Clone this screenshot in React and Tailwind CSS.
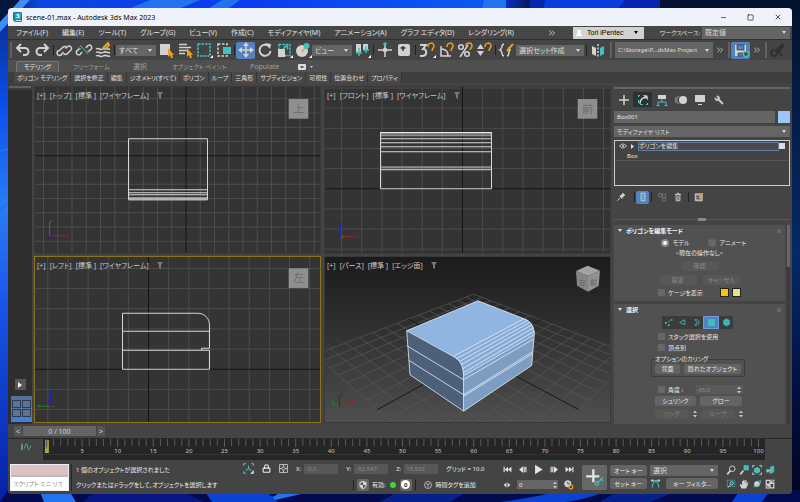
import { Minus, Square, X, UserRound, Wrench, Lock, ChevronsRight } from "lucide-react";
import clsx from "clsx";

const MENU = [
  "ファイル(F)",
  "編集(E)",
  "ツール(T)",
  "グループ(G)",
  "ビュー(V)",
  "作成(C)",
  "モディファイヤ(M)",
  "アニメーション(A)",
  "グラフ エディタ(D)",
  "レンダリング(R)",
];

const RIBBON_PANELS = [
  "ポリゴン モデリング",
  "選択を修正",
  "編集",
  "ジオメトリ(すべて)",
  "ポリゴン",
  "ループ",
  "三角形",
  "サブディビジョン",
  "可視性",
  "位置合わせ",
  "プロパティ",
];

const LIGHT = "#d2d2d2";
const TEAL = "#3fc1c0";
const GOLD = "#f0a01e";

/* ---------- small building blocks ---------- */

function Icon({ children, className = "size-4", box = "0 0 16 16" }) {
  return (
    <svg
      viewBox={box}
      className={clsx("shrink-0", className)}
      fill="none"
      stroke={LIGHT}
      strokeWidth="1.5"
      aria-hidden="true"
    >
      {children}
    </svg>
  );
}

function ToolButton({ label, active, flyout, children }) {
  return (
    <button
      aria-label={label}
      className={clsx(
        "flex h-[17px] w-[19px] shrink-0 items-center justify-center",
        active && "rounded-xs bg-[#5582be]"
      )}
    >
      <Icon className="h-4 w-[18px]" box="0 0 18 16">
        {children}
        {flyout && <path d="M18 13v3h-3z" fill="#fff" stroke="none" />}
      </Icon>
    </button>
  );
}

function Sep() {
  return (
    <div className="flex w-1 shrink-0 justify-center">
      <div className="h-2.5 w-px bg-[#222]" />
    </div>
  );
}

function Handle() {
  return <div className="mx-px h-4 w-0.5 shrink-0 bg-[#626262]" />;
}

function Select({ label, value, className, textClass = "text-[7px]" }) {
  return (
    <div className={clsx("relative flex shrink-0 items-center bg-[#656565]", className)}>
      <select
        aria-label={label}
        defaultValue={value}
        className={clsx(
          "h-full w-full appearance-none truncate bg-transparent pr-2 pl-[3px] leading-none text-[#dcdcdc] outline-none",
          textClass
        )}
      >
        <option>{value}</option>
      </select>
      <svg viewBox="0 0 4 3" className="pointer-events-none absolute right-1 h-[3px] w-1">
        <path d="M0 0h4L2 3z" fill="#d8d8d8" />
      </svg>
    </div>
  );
}

function PushButton({ children, className, disabled }) {
  return (
    <button
      disabled={disabled}
      className={clsx(
        "flex items-center justify-center rounded-xs text-[6px] leading-none whitespace-nowrap",
        disabled ? "bg-[#575757] text-[#8c8c8c]" : "bg-[#646464] text-[#e8e8e8]",
        className
      )}
    >
      {children}
    </button>
  );
}

function Check({ children, className }) {
  return (
    <label className={clsx("flex items-center gap-[3px] whitespace-nowrap", className)}>
      <input type="checkbox" className="size-[7px] appearance-none bg-[#676767] checked:bg-white" />
      {children}
    </label>
  );
}

function Spinner() {
  return (
    <svg viewBox="0 0 4 8" className="h-2 w-1 shrink-0" fill="#c4c4c4" aria-hidden="true">
      <path d="M0 3h4L2 .5zM0 5h4L2 7.500z" />
    </svg>
  );
}

/* ---------- wallpaper ---------- */

function Wallpaper() {
  return (
    <svg
      viewBox="0 0 800 502"
      preserveAspectRatio="none"
      className="absolute inset-0 size-full"
      aria-hidden="true"
    >
      <defs>
        <linearGradient id="wpTop">
          <stop offset="0" stopColor="#0a1e58" />
          <stop offset=".05" stopColor="#0b46e0" />
          <stop offset=".3" stopColor="#0c3bf0" />
          <stop offset=".6" stopColor="#0a5af0" />
          <stop offset=".63" stopColor="#0733cc" />
          <stop offset=".67" stopColor="#04103c" />
          <stop offset="1" stopColor="#04132f" />
        </linearGradient>
        <linearGradient id="wpLeft" x2="0" y2="1">
          <stop offset="0" stopColor="#0a2a90" />
          <stop offset=".2" stopColor="#0a50ec" />
          <stop offset=".4" stopColor="#2a7cf6" />
          <stop offset=".6" stopColor="#1a55ea" />
          <stop offset="1" stopColor="#0420a4" />
        </linearGradient>
        <linearGradient id="wpRight" x2="0" y2="1">
          <stop offset="0" stopColor="#04132f" />
          <stop offset=".5" stopColor="#052a66" />
          <stop offset=".8" stopColor="#020d3e" />
          <stop offset="1" stopColor="#01051c" />
        </linearGradient>
      </defs>
      <path d="M0 0h800v10H0z" fill="url(#wpTop)" />
      <path d="M0 8h12v494H0z" fill="url(#wpLeft)" />
      <path d="M788 8h12v494h-12z" fill="url(#wpRight)" />
      <path d="M8 490h792v12H0z" fill="#030a4e" />
      <path d="M0 0h20L0 22z" fill="#06163c" />
      <path d="M20 0h10L0 32V22z" fill="#3f8bf8" />
      <g fill="#2173ee">
        <path d="M150 0h50l-24 10h-50zM222 0h18l-14 10h-20zM484 0h22v10h-24z" />
        <path d="M0 150l9-2v2l-9 2zM0 208l9-6v2l-9 7z" />
        <path d="M40 492h30l6 10H44zM270 502c16-6 30-6 44-12h-30c-8 6-14 8-24 12z" />
      </g>
      <path d="M84 502c4-6 10-10 16-12h80l24 12z" fill="#071683" />
      <path d="M204 490h60l14 12h-66zM500 502c30-4 50-8 60-12h50c-16 6-30 10-44 12zM740 490h30l-8 12h-30z" fill="#0a43d4" />
      <path d="M400 490h70l-20 12h-70zM620 490h60l-30 12h-50z" fill="#06208c" />
      <path d="M530 0h130v10H530z" fill="#0626b0" />
      <path d="M545 0h80l-8 10h-74z" fill="#0a3ce0" />
    </svg>
  );
}

/* ---------- top bars ---------- */

function TitleBar() {
  return (
    <header className="flex h-[18px] shrink-0 items-center bg-[#f0f2f9] pr-2.5 pl-[5px] text-black">
      <svg viewBox="0 0 9 10" className="mr-1 h-2.5 w-[9px]" aria-hidden="true">
        <path d="M1 0h7l1 1v8l-1 1H2L0 8V1z" fill="#137d92" />
        <path d="M2 1h6v6H2z" fill="#2aa9bd" />
        <text x="3" y="6" fontSize="6" fontWeight="bold" fill="#fff">3</text>
        <path d="M2 8h6v1H3z" fill="#d7f1f5" />
      </svg>
      <h1 className="flex-1 truncate text-[7px] leading-none">scene-01.max - Autodesk 3ds Max 2023</h1>
      <div className="flex items-center gap-5">
        <button aria-label="最小化"><Minus className="size-[7px]" /></button>
        <button aria-label="最大化"><Square className="size-[7px]" /></button>
        <button aria-label="閉じる"><X className="size-2" /></button>
      </div>
    </header>
  );
}

function MenuBar() {
  return (
    <nav className="flex h-[14px] shrink-0 items-center border-b border-[#303030] bg-[#464646] pl-2 text-[7px] leading-none text-[#e2e2e2]">
      <div className="flex gap-[14px]">
        {MENU.map((m) => (
          <button key={m} className="whitespace-nowrap">{m}</button>
        ))}
      </div>
      <div className="ml-auto flex h-full items-center">
        <button aria-label="メニューを展開" className="mr-4">
          <ChevronsRight className="size-2.5" />
        </button>
        <button className="flex h-3 w-[71px] items-center bg-[#d2d2d2] px-0.5 font-['Liberation_Sans'] text-[7px] text-black">
          <UserRound className="mr-1 size-2 fill-white text-white" />
          Tori iPentec
          <svg viewBox="0 0 4 3" className="mr-1 ml-auto h-[3px] w-1"><path d="M0 0h4L2 3z" /></svg>
        </button>
        <span className="ml-3 w-11 text-right text-[6px] whitespace-nowrap">ワークスペース:</span>
        <Select label="ワークスペース" value="既定値" className="mr-0.5 ml-0.5 h-3 w-[88px]" />
      </div>
    </nav>
  );
}

function Toolbar() {
  return (
    <div className="flex h-5 shrink-0 items-center overflow-hidden bg-[#444] pl-px">
      <Handle />
      <ToolButton label="元に戻す">
        <path d="M4 6h7a3.500 3.500 0 0 1 0 7H9M7 2L3 6l4 4" strokeWidth="2" />
      </ToolButton>
      <ToolButton label="やり直し">
        <path d="M14 6H7a3.500 3.500 0 0 0 0 7h2M11 2l4 4-4 4" strokeWidth="2" />
      </ToolButton>
      <Sep />
      <ToolButton label="選択してリンク">
        <path d="M8 9.500L6.500 11A2.500 2.500 0 1 1 4 8l3-3a2.500 2.500 0 0 1 4 0M10 6l1.500-1.500A2.500 2.500 0 1 1 15 8l-3 3a2.500 2.500 0 0 1-4 0" transform="translate(-.5 .5)" />
      </ToolButton>
      <ToolButton label="選択をリンク解除">
        <path d="M7 10l-1 1.500A2.500 2.500 0 1 1 3 8l2-2M11 6l1-1.500A2.500 2.500 0 1 1 15 8l-2 2" />
        <path d="M5 3l8 9M3 6l3 1M12 9l3 1" stroke={TEAL} strokeWidth="1" />
      </ToolButton>
      <ToolButton label="スペース ワープにバインド">
        <path d="M2 7c3-2 4 2 7 0s4 1 7 0M2 10.500c3-2 4 2 7 0s4 1 7 0M2 14c3-2 4 2 7 0s4 1 7 0" />
        <path d="M9 6l5-5 1 2-4 5" stroke={GOLD} strokeWidth="2" />
      </ToolButton>
      <Sep />
      <Select label="選択フィルタ" value="すべて" className="h-[11px] w-10" />
      <ToolButton label="オブジェクトを選択">
        <path d="M3 2h10v11H3z" fill={LIGHT} stroke="none" />
        <path d="M11 6v9l2-2 1 3h2l-1-3h2z" fill={GOLD} stroke="none" />
      </ToolButton>
      <ToolButton label="名前による選択">
        <path d="M3 2.500h8M3 5.500h12M3 8.500h8M3 11.500h6" />
        <path d="M11 6v9l2-2 1 3h2l-1-3h2z" fill={GOLD} stroke="none" />
      </ToolButton>
      <ToolButton label="矩形選択領域" flyout>
        <path d="M3 2h12v12H3z" stroke={TEAL} strokeDasharray="2.500 1" />
      </ToolButton>
      <ToolButton label="窓/交差">
        <path d="M4 2h9v12H4z" strokeDasharray="2.500 1.500" />
        <path d="M9 5h8v7H9z" fill={TEAL} stroke="none" />
      </ToolButton>
      <Sep />
      <ToolButton label="選択して移動" active>
        <path d="M9 3v10M4 8h10" />
        <path d="M9 0l3 4H6zM9 16l3-4H6zM1 8l4-3v6zM17 8l-4-3v6z" fill={LIGHT} stroke="none" />
      </ToolButton>
      <ToolButton label="選択して回転">
        <path d="M13 4.500A5.500 5.500 0 1 0 14.500 9" strokeWidth="2" />
        <path d="M9 1l6 1-1 5z" fill={LIGHT} stroke="none" />
      </ToolButton>
      <ToolButton label="選択して均等にスケール" flyout>
        <path d="M4 2.500h11v11H4z" stroke={TEAL} strokeDasharray="2.500 1" />
        <path d="M3 7h7v8H3z" fill={LIGHT} stroke="none" />
        <path d="M8 7l4-4M9.500 4.500h3v3" stroke={TEAL} />
      </ToolButton>
      <ToolButton label="選択して配置" flyout>
        <circle cx="8" cy="9" r="6" fill={LIGHT} stroke="none" />
        <path d="M8 10l3-4" stroke={GOLD} />
        <circle cx="12.500" cy="4" r="3" fill={TEAL} stroke="none" />
      </ToolButton>
      <Select label="参照座標系" value="ビュー" className="h-[11px] w-10" />
      <ToolButton label="基点中心を使用" flyout>
        <path d="M3 2h5v8H3zM10 2h5v6h-5z" fill={LIGHT} stroke="none" />
        <path d="M6 6v8M3 11h6M13 4v7M10 8h6" stroke={TEAL} />
      </ToolButton>
      <Sep />
      <ToolButton label="選択して操作">
        <path d="M9 1v14M2 8h14" />
        <circle cx="9" cy="2" r="1" fill={TEAL} stroke={TEAL} />
        <circle cx="9" cy="8" r="1.500" fill={LIGHT} />
      </ToolButton>
      <ToolButton label="キーボード ショートカット">
        <rect x="3" y="2" width="12" height="12" rx="2" fill={LIGHT} stroke="none" />
        <path d="M8 4v5M5.500 6h5" stroke="#333" />
      </ToolButton>
      <Sep />
      <ToolButton label="スナップ切り替え" flyout>
        <path d="M2 3h6L5 7c5 0 4 7-1 7H2" strokeWidth="2" />
        <path d="M10 5c0-5 6-5 6-1 0 2-2 2-2 5" stroke={GOLD} />
      </ToolButton>
      <ToolButton label="角度スナップ">
        <path d="M4 4v10h10M4 7c4 0 7 2 7 7" />
        <path d="M10 5c0-5 6-5 6-1 0 2-2 2-2 5" stroke={GOLD} />
      </ToolButton>
      <ToolButton label="パーセント スナップ">
        <circle cx="5" cy="5" r="2.300" /><circle cx="11" cy="12" r="2.300" />
        <path d="M12 3L4 15" />
        <path d="M10 4c0-4 6-4 6 0 0 2-2 2-2 4" stroke={GOLD} />
      </ToolButton>
      <ToolButton label="スピナー スナップ">
        <path d="M2 7h7L5.500 2zM2 9h7l-3.500 5z" fill={LIGHT} stroke="none" />
        <path d="M10 5c0-5 6-5 6-1 0 2-2 2-2 5" stroke={GOLD} />
      </ToolButton>
      <Sep />
      <ToolButton label="名前付き選択セットを編集">
        <path d="M6 2c-3 0-1 5-4 6 3 1 1 6 4 6M9 14c3 0 1-5 3-6-1-1-1-2-1-3" />
        <path d="M9 9l6-7" stroke={GOLD} strokeWidth="2" />
      </ToolButton>
      <Select label="選択セット" value="選択セット作成" className="h-[11px] w-[68px]" />
      <Sep />
      <ToolButton label="ミラー">
        <path d="M3 4l4 2v8l-4-2z" fill={LIGHT} stroke="none" />
        <path d="M9 2v13" strokeDasharray="2 1.500" />
        <path d="M15 4l-4 2v8l4-2z" fill={TEAL} stroke="none" />
      </ToolButton>
      <div className="mx-0.5"><Handle /></div>
      <Select
        label="プロジェクト フォルダ"
        value="C:\Storage\P...dsMax Project"
        className="h-4 w-[98px]"
        textClass="text-[6px]"
      />
      <button aria-label="さらに表示" className="mx-0.5">
        <ChevronsRight className="size-2.5 text-[#ccc]" />
      </button>
      <Handle />
      <ToolButton label="自動保存" active>
        <path d="M3 3h11v11H3z" fill={LIGHT} stroke="none" />
        <path d="M5 3h7v5H5zM6 11h5v3H6z" fill="#5582be" stroke="#333" strokeWidth=".7" />
        <circle cx="14" cy="12" r="2.600" fill="#444" stroke={TEAL} />
      </ToolButton>
      <button aria-label="さらに表示" className="mx-0.5">
        <ChevronsRight className="size-2.5 text-[#ccc]" />
      </button>
      <Handle />
      <ToolButton label="ペイント">
        <path d="M7 9l7-7M9 11l6-8" stroke="#2e2e2e" strokeWidth="2" />
        <circle cx="5" cy="11" r="3" stroke="#2e2e2e" />
        <path d="M10 10l3 4" stroke="#2e2e2e" />
      </ToolButton>
    </div>
  );
}

function Ribbon() {
  return (
    <div className="shrink-0 text-[7px] leading-none">
      <div className="flex h-3 items-end bg-[#4f4f4f] pl-2 text-[#9f9f9f]">
        <button className="mr-3.5 h-[11px] w-[43px] rounded-t-xs border border-b-0 border-[#777] bg-[#5a5a5a] text-[6px] text-[#e4e4e4]">
          モデリング
        </button>
        <button className="mb-0.5 w-[35px] text-[6px] whitespace-nowrap">フリーフォーム</button>
        <button className="mb-0.5 ml-6 w-4">選択</button>
        <button className="mb-0.5 ml-6 w-[54px] text-[6px] whitespace-nowrap">オブジェクト ペイント</button>
        <button className="mb-0.5 ml-6">Populate</button>
        <button aria-label="リボンを最小化" className="mb-0.5 ml-[19px] flex items-center gap-1">
          <svg viewBox="0 0 8 6" className="h-1.5 w-2"><rect width="8" height="6" rx="1" fill="#ddd" /><path d="M2.500 3h3" stroke="#333" strokeWidth="1.500" /></svg>
          <svg viewBox="0 0 3 2" className="h-0.5 w-[3px]"><path d="M0 0h3L1.500 2z" fill="#ccc" /></svg>
        </button>
      </div>
      <div className="flex h-[11px] items-center bg-[#3e3e3e] pl-1.5 text-[6px] text-[#e0e0e0]">
        {RIBBON_PANELS.map((p) => (
          <button key={p} className="h-full border-r border-[#353535] bg-[#484848] px-[3px] whitespace-nowrap">
            {p}
          </button>
        ))}
      </div>
    </div>
  );
}

/* ---------- viewports ---------- */

function GridLines({ cx, cy, step }) {
  const n = Array.from({ length: 43 }, (_, i) => i - 21).filter((i) => i !== 0);
  return (
    <g strokeWidth="1">
      <g stroke="#4c4c4c">
        {n.map((i) => (
          <path key={i} d={`M${cx + i * step} 0V502M0 ${cy + i * step}H800`} />
        ))}
      </g>
      <path d={`M${cx} 0V502M0 ${cy}H800`} stroke="#141414" />
    </g>
  );
}

function FaceCube({ x, y, label }) {
  return (
    <g>
      <rect x={x} y={y} width="19" height="19" fill="#8f8f8f" stroke="#9c9c9c" strokeWidth=".5" />
      <text x={x + 9.5} y={y + 13.5} textAnchor="middle" fontSize="11" fill="#666b74">{label}</text>
    </g>
  );
}

function Axis({ x, y, arms }) {
  return (
    <g strokeWidth="1" fontSize="6">
      {arms.map(([name, dx, dy, color]) => (
        <g key={name}>
          <path d={`M${x} ${y}l${dx} ${dy}`} stroke={color} />
          <text x={x + dx} y={y + dy + 1} fill={color}>{name}</text>
        </g>
      ))}
    </g>
  );
}

function Viewport({ name, mode = "ワイヤフレーム", box, active, className = "bg-[#343434]", children }) {
  return (
    <section
      className={clsx(
        "relative overflow-hidden border",
        active ? "border-[#8c7220]" : "border-[#393939]",
        className
      )}
    >
      <svg
        viewBox={box}
        preserveAspectRatio="xMidYMid slice"
        className="absolute inset-0 size-full"
        fill="none"
      >
        {children}
      </svg>
      <div className="relative flex items-center gap-1 px-0.5 pt-1 text-[7px] leading-[9px] text-[#c8c8c8]">
        <span>[+]</span>
        <span>[{name}]</span>
        <span>[標準 ]</span>
        <span>[{mode}]</span>
        <svg viewBox="0 0 6 7" className="ml-1 h-[7px] w-1.5"><path d="M0 0h6L4 3v4L2 6V3z" fill="#777" /></svg>
      </div>
    </section>
  );
}

const RED = "#b01c1c";
const GREEN = "#188a18";
const BLUE = "#2020c0";

// ground plane -> screen; u and v run from -1 (far) to 1 (near)
function project(u, v) {
  const w = 1 - 0.2033 * u - 0.2133 * v;
  return [(476.3 - 15 * u - 179.5 * v) / w, (355.4 - 28.8 * u - 32.9 * v) / w];
}

function GroundGrid() {
  const steps = Array.from({ length: 15 }, (_, i) => (i - 7) / 7);
  const line = (a, b) => `M${a.join(" ")}L${b.join(" ")}`;
  return (
    <g>
      <g stroke="#595959" strokeWidth=".7">
        {steps.map((s) => (
          <path
            key={s}
            d={line(project(s, -1), project(s, 1)) + line(project(-1, s), project(1, s))}
          />
        ))}
      </g>
      <path
        d={line(project(-1, 0), project(1, 0)) + line(project(0, -1), project(0, 1))}
        stroke="#141414"
      />
    </g>
  );
}

// profile of the rounded edge, near end and far end
const BEVEL = [
  [453.3, 356.7, 524, 319],
  [456.5, 359, 527.5, 320.5],
  [459, 362, 530, 322.5],
  [461, 365, 532, 325],
  [462.5, 369, 533.5, 328],
  [463.3, 373, 534.3, 331.5],
  [463.5, 376, 534.3, 335],
];

function Viewports() {
  return (
    <main className="grid flex-1 grid-cols-2 grid-rows-2 gap-x-[3px] gap-y-0.5 pt-[3px] pr-px pb-px pl-0.5">
      <Viewport name="トップ" box="35 87 285 167">
        <GridLines cx={186} cy={156.5} step={14.25} />
        <g stroke="#d6d6d6">
          <path d="M128.500 139.500h79v61h-79zM129 190.500h78M129 193.500h78M129 195.500h78" />
          <path d="M129 199.500h78" strokeWidth="3" stroke="#b4b4b4" />
        </g>
        <FaceCube x={289} y={100} label="上" />
        <Axis x={49.5} y={236.5} arms={[["x", 16, 0, RED], ["y", 0, -14, GREEN], ["z", 0.5, 0.5, BLUE]]} />
      </Viewport>

      <Viewport name="フロント" box="325 87 285 167">
        <GridLines cx={462.5} cy={189.5} step={20.15} />
        <g stroke="#d6d6d6">
          <path d="M380.500 133.500h111v56h-111zM381 139.500h110M381 143.500h110M381 147.500h110M381 152.500h110M381 170.500h110" />
          <path d="M380 133.500h112" stroke="#fff" />
          <path d="M381 136h110M381 168h110" strokeWidth="2" stroke="#8c8c8c" />
        </g>
        <FaceCube x={578} y={100} label="前" />
        <Axis x={340.5} y={237.5} arms={[["x", 15, 0, RED], ["z", 0, -14, BLUE], ["y", 0.5, 0.5, GREEN]]} />
      </Viewport>

      <Viewport name="レフト" box="35 256 285 166" active>
        <GridLines cx={148.5} cy={368.5} step={20.15} />
        <g stroke="#d6d6d6">
          <path d="M209.500 349.500v19h-87v-56h75c7 0 12 5 12 12v23h-8v2M122.500 330.500h87M122.500 349.500h87" />
        </g>
        <FaceCube x={289} y={268} label="左" />
        <Axis x={50.5} y={405.5} arms={[["y", -13, 0, GREEN], ["z", 0, -14, BLUE], ["x", 0.5, 0.5, RED]]} />
      </Viewport>

      <Viewport
        name="パース"
        mode="エッジ面"
        box="325 257 285 166"
        className="bg-linear-to-b from-[#1b1b1b] to-[#4e4e4e]"
      >
        <GroundGrid />
        <path d="M478 301L406.700 331 453.300 356.700 463.500 376 534.300 335C534 325 530 321 524 319z" fill="#8fb5e0" />
        <path d="M406.700 331L453.300 356.700C460 360 463.500 366 463.500 376L463.700 411.300 410 375z" fill="#4c6079" />
        <path d="M463.500 372L534.300 331.500 531.700 365.700 463.700 411.300z" fill="#7d9dc2" />
        <path d="M453.300 356.700L524 319C530 321 534 326 534.300 334L463.500 376C463 366 460 361 453.300 356.700z" fill="#87abd6" />
        <g stroke="#e4eefa" strokeWidth=".8">
          <path d="M478 301L406.700 331 453.300 356.700C460 360 463.500 366 463.500 376V411.300L410 375 406.700 331M478 301L524 319C530 321 534 326 534.300 334L531.700 365.700 463.700 411.300" />
          {BEVEL.map(([x1, y1, x2, y2]) => (
            <path key={y1} d={`M${x1} ${y1}L${x2} ${y2}`} />
          ))}
          <path d="M407.300 346.300L463.500 380 534 339M409 360.700L463.500 395 532.500 352M463.500 396.500L532.500 354" />
        </g>
        <g stroke="none">
          <path d="M587.700 266L600 271 588 276.300 576 271.300z" fill="#a3a3a3" />
          <path d="M576 271.300L588 276.300V292L577 286z" fill="#858585" />
          <path d="M600 271L588 276.300V292L598.700 286z" fill="#929292" />
          <text x="579" y="285" fontSize="7" fill="#5c6068">左</text>
          <text x="590" y="285" fontSize="7" fill="#5c6068">前</text>
        </g>
        <Axis x={339.5} y={407} arms={[["x", 12, -5, RED], ["z", 0, -12, BLUE], ["y", -8, -4, GREEN]]} />
      </Viewport>
    </main>
  );
}

function LayoutStrip() {
  return (
    <aside className="flex w-6 shrink-0 flex-col items-center bg-[#2e2e2e] pb-0.5">
      <div className="flex h-[7px] w-full items-center bg-[#3e3e3e] px-px">
        <div className="h-0.5 w-full bg-[#606060]" />
      </div>
      <button aria-label="ビューポート レイアウト タブを展開" className="mt-auto flex h-[11px] w-[11px] items-center justify-center bg-[#555]">
        <svg viewBox="0 0 4 6" className="h-1.5 w-1"><path d="M0 0l4 3-4 3z" fill="#eee" /></svg>
      </button>
      <button aria-label="4 分割レイアウト" className="mt-1.5 ml-0.5 grid h-[26px] w-[21px] grid-cols-2 gap-px bg-linear-to-b from-[#566f92] to-[#3f82dc] px-px pt-1 pb-[5px]">
        {[0, 1, 2, 3].map((i) => (
          <span key={i} className="border border-[#2b3d56] bg-[#62728a]" />
        ))}
      </button>
    </aside>
  );
}

/* ---------- command panel ---------- */

function Rollout({ title, children, className }) {
  return (
    <section className={clsx("bg-[#515151] px-1", className)}>
      <h2 className="flex h-[11px] items-center gap-1 text-[6px] font-bold text-[#f4f4f4]">
        <svg viewBox="0 0 4 3" className="h-[3px] w-1"><path d="M0 0h4L2 3z" fill="#ddd" /></svg>
        {title}
        <span className="ml-auto size-1 bg-[#666]" />
      </h2>
      {children}
    </section>
  );
}

function PanelTabs() {
  return (
    <div className="flex h-[15px] items-center">
      <ToolButton label="作成"><path d="M9 3v10M4 8h10" /></ToolButton>
      <button aria-label="修正" className="flex h-[15px] w-[19px] items-center justify-center bg-[#303030]">
        <Icon className="size-3">
          <path d="M2 2h12v12H2z" stroke={TEAL} strokeDasharray="4 4" strokeDashoffset="2" />
          <path d="M4 13c0-6 3-8 8-9" strokeWidth="2" />
          <path d="M10 2h4v4h-4z" fill={LIGHT} stroke="none" />
        </Icon>
      </button>
      <ToolButton label="階層">
        <path d="M5 3h8v4H5z" fill={LIGHT} stroke="none" />
        <path d="M9 7v3M5 13v-3h8v3M3.500 13.500h3M11.500 13.500h3" stroke={TEAL} strokeWidth="1" />
      </ToolButton>
      <ToolButton label="モーション">
        <circle cx="11" cy="8" r="4" fill={LIGHT} stroke="none" />
        <path d="M7 4c-3 2-3 6 0 8M4 5c-1 2-1 4 0 6" stroke="#777" />
      </ToolButton>
      <ToolButton label="表示">
        <path d="M4 3h10v7H4zM7 12h4v1H7z" fill={LIGHT} stroke="none" />
      </ToolButton>
      <button aria-label="ユーティリティ" className="flex w-[19px] justify-center">
        <Wrench className="size-2.5 -scale-x-100 fill-[#ccc] text-[#ccc]" strokeWidth={1} />
      </button>
    </div>
  );
}

function ModifierStack() {
  return (
    <>
      <ul className="mt-[3px] h-[46px] border border-[#ccc] bg-[#434343] leading-none text-[#e4e4e4]">
        <li className="flex h-2.5 items-center pr-1 pl-1">
          <Icon className="h-1.5 w-2" box="0 0 12 8">
            <path d="M1 4c3-4 7-4 10 0-3 4-7 4-10 0z" /><circle cx="6" cy="4" r="1" />
          </Icon>
          <svg viewBox="0 0 3 5" className="mx-1 h-[5px] w-[3px]"><path d="M0 0l3 2.500L0 5z" fill="#ddd" /></svg>
          <span className="flex h-[9px] flex-1 items-center border border-[#5c7ca5] bg-[#4a4a4a]">ポリゴンを編集</span>
          <span className="size-1.5 bg-[#ddd]" />
        </li>
        <li className="flex h-2.5 items-center border-b border-[#555] pl-3">Box</li>
      </ul>
      <div className="mt-[3px] flex h-4 items-center pl-0.5">
        <button aria-label="スタックをピン固定" className="w-4">
          <Icon className="size-2.5"><path d="M2 14l5-5" /><path d="M5 6l5 5 1-3 4-3-4-4-3 4z" fill={LIGHT} stroke="none" /></Icon>
        </button>
        <Sep />
        <button aria-label="最終結果を表示" className="flex h-[13px] w-[13px] items-center justify-center rounded-xs bg-[#5582be]">
          <Icon className="size-2.5"><path d="M4 2h8M5 3v11h6V3" /><path d="M8 4v9" stroke={TEAL} strokeWidth="2" /></Icon>
        </button>
        <Sep />
        <button aria-label="固有にする" className="flex w-[17px] justify-center">
          <Icon className="size-2.5"><g stroke="#777"><circle cx="5" cy="5" r="3" /><circle cx="11" cy="6" r="3" /><circle cx="11" cy="12" r="3" /></g></Icon>
        </button>
        <button aria-label="モディファイヤを除去" className="flex w-4 justify-center">
          <Icon className="size-2.5"><path d="M3 4h10M6 2h4M5 5v9h6V5M8 6v7" /></Icon>
        </button>
        <Sep />
        <button aria-label="モディファイヤ セットを設定" className="ml-1">
          <Icon className="size-2.5">
            <path d="M2 3h11v11H2z" fill="#999" /><path d="M4 7h5M4 10h5" stroke="#333" />
            <path d="M8 9l6-7" stroke={GOLD} strokeWidth="2.500" />
          </Icon>
        </button>
      </div>
    </>
  );
}

function CommandPanel() {
  return (
    <aside className="w-[180px] shrink-0 overflow-hidden bg-[#444] pr-0.5 pl-0.5 text-[6px] leading-none text-[#e8e8e8]">
      <div className="mt-1 h-0.5 bg-[#636363]" />
      <div className="mt-[3px]"><PanelTabs /></div>
      <div className="mt-1 flex h-3 gap-[3px]">
        <input
          aria-label="オブジェクト名"
          defaultValue="Box001"
          className="min-w-0 flex-1 bg-[#646464] px-[3px] outline-none"
        />
        <button aria-label="オブジェクト カラー" className="w-3 bg-[#9cc6f5]" />
      </div>
      <Select
        label="モディファイヤ"
        value="モディファイヤ リスト"
        className="mt-[3px] h-[11px]"
        textClass="text-[6px]"
      />
      <ModifierStack />
      <div className="mt-[13px] mb-1 flex h-[3px] items-center justify-center">
        <div className="h-px flex-1 bg-[#5a5a5a]" />
        <div className="h-[3px] w-2 bg-[#888]" />
        <div className="h-px flex-1 bg-[#5a5a5a]" />
      </div>

      <div className="flex gap-0.5">
        <div className="flex-1">
          <Rollout title="ポリゴンを編集モード" className="h-[76px]">
            <div className="mt-[3px] flex justify-center gap-[18px] pl-2">
              <label className="flex items-center gap-1">
                <input type="radio" name="mode" defaultChecked className="size-2 appearance-none rounded-full bg-[#686868] checked:border-2 checked:border-[#888] checked:bg-white" />
                モデル
              </label>
              <label className="flex items-center gap-1">
                <input type="radio" name="mode" className="size-2 appearance-none rounded-full bg-[#686868] checked:bg-white" />
                アニメート
              </label>
            </div>
            <p className="mt-[3px] text-center">&lt;現在の操作なし&gt;</p>
            <PushButton disabled className="mx-auto mt-[5px] h-2.5 w-[38px]">確認</PushButton>
            <div className="mt-1 flex justify-center gap-1.5">
              <PushButton disabled className="h-2.5 w-[38px]">設定</PushButton>
              <PushButton disabled className="h-2.5 w-[38px]">キャンセル</PushButton>
            </div>
            <div className="mt-[3px] flex items-center pl-10">
              <Check className="w-[62px]">ケージを表示</Check>
              <button aria-label="ケージの色" className="size-[9px] border border-[#222] bg-[#ffc400]" />
              <button aria-label="選択したケージの色" className="ml-[3px] size-[9px] border border-[#222] bg-[#e4e08c]" />
            </div>
          </Rollout>

          <Rollout title="選択" className="mt-[3px] h-[120px]">
            <div className="mt-px ml-11 flex h-[13px] w-[71px] items-center bg-[#3b3b3b]">
              {[
                ["頂点", <path key="p" d="M2 7h3v3H2zM7 11h3v3H7zM8 5h2v2H8zM12 2h3v3h-3z" fill={TEAL} stroke="none" />],
                ["エッジ", <path key="p" d="M12 3v9L3 8z" stroke={TEAL} />],
                ["境界", <path key="p" d="M5 3c10-1 10 10 0 10 4-3 4-7 0-10z" stroke={TEAL} />],
                ["ポリゴン", <path key="p" d="M2 2h12v12H2z" fill={TEAL} stroke="none" />],
                ["要素", <path key="p" d="M8 1l6 3v7l-6 4-6-4V4zM2 5l6 2v7M8 7l6-2" fill={TEAL} stroke="#24807f" strokeWidth=".8" />],
              ].map(([label, shape], i) => (
                <button
                  key={label}
                  aria-label={label}
                  className={clsx(
                    "flex h-[13px] flex-1 items-center justify-center",
                    i === 3 && "border border-[#6f9bd8] bg-[#5582be]"
                  )}
                >
                  <Icon className="size-[9px]">{shape}</Icon>
                </button>
              ))}
            </div>
            <Check className="mt-1 ml-10">スタック選択を使用</Check>
            <Check className="mt-1 ml-10">頂点別</Check>
            <fieldset className="mt-[5px] ml-[33px] w-[94px] border border-[#3c3c3c] px-[3px] pt-0.5 pb-0.5">
              <legend className="whitespace-nowrap">オプションのカリング</legend>
              <div className="flex justify-between">
                <PushButton className="h-2.5 w-[25px]">背面</PushButton>
                <PushButton className="h-2.5 w-[57px]">隠れたオブジェクト</PushButton>
              </div>
            </fieldset>
            <div className="mt-2 ml-10 flex h-[9px] items-center">
              <Check className="w-[38px]">角度 :</Check>
              <div className="flex h-[9px] w-[47px] items-center bg-[#5a5a5a] pr-0.5">
                <input aria-label="角度" disabled defaultValue="45.0" className="min-w-0 flex-1 bg-transparent px-0.5 text-[#8a8a8a]" />
                <Spinner />
              </div>
            </div>
            <div className="mt-0.5 ml-[37px] flex gap-1">
              <PushButton className="h-2.5 w-[41px]">シュリンク</PushButton>
              <PushButton className="h-2.5 w-[42px]">グロー</PushButton>
            </div>
            <div className="mt-[3px] ml-[37px] flex items-center">
              <PushButton disabled className="h-2.5 w-[34px]">リング</PushButton>
              <span className="mx-1"><Spinner /></span>
              <PushButton disabled className="h-2.5 w-[34px]">ループ</PushButton>
              <span className="mx-1"><Spinner /></span>
            </div>
          </Rollout>
        </div>
        <div className="w-[3px] bg-[#3a3a3a]">
          <div className="h-[42px] bg-[#666]" />
        </div>
      </div>
    </aside>
  );
}

/* ---------- bottom bars ---------- */

function TimeSlider() {
  return (
    <div className="flex h-[14px] shrink-0 items-center gap-px bg-[#444] pl-1.5 text-[7px] leading-none text-[#d0d0d0]">
      <button aria-label="前のフレーム" className="h-2.5 w-2 bg-[#565656]">&lt;</button>
      <button className="h-2.5 w-[73px] bg-[#656565]">0 / 100</button>
      <button aria-label="次のフレーム" className="h-2.5 w-2 bg-[#565656]">&gt;</button>
    </div>
  );
}

function TrackBar() {
  const x = (frame) => 3.5 + frame * 7.12;
  const frames = Array.from({ length: 101 }, (_, i) => i);
  return (
    <div className="flex h-[22px] shrink-0 border-t border-[#2a2a2a] bg-[#444]">
      <button aria-label="ミニ カーブ エディタを開く" className="flex w-[35px] shrink-0 items-start justify-center pt-1">
        <Icon className="h-2 w-2.5" box="0 0 12 10">
          <path d="M1 1v8" stroke="#aaa" /><path d="M4 7c2-8 3-8 4-2s2 4 4-2" stroke={TEAL} strokeWidth="1" />
        </Icon>
      </button>
      <svg viewBox="0 0 722 21" preserveAspectRatio="none" className="h-[21px] min-w-0 flex-1 bg-[#252525]">
        <rect x="2" y="1" width="4" height="13" fill="#9a9222" />
        {frames.map((f) => (
          <path key={f} d={`M${x(f)} 0v${f % 5 ? 7 : 8}`} stroke="#5b5b5b" />
        ))}
        {frames.filter((f) => f % 5 === 0).map((f) => (
          <text key={f} x={x(f)} y="14" textAnchor="middle" fontSize="6" fill="#c8c8c8">{f}</text>
        ))}
        <path d="M0 15.500h722" stroke="#353535" />
      </svg>
      <div className="w-[27px] shrink-0" />
    </div>
  );
}

function Coord({ axis, value }) {
  return (
    <label className="flex items-center gap-[3px]">
      {axis}:
      <input disabled defaultValue={value} className="h-2.5 w-[34px] bg-[#575757] px-0.5 text-[#8c8c8c]" />
    </label>
  );
}

const TRANSPORT = [
  ["先頭へ", "M1 3h2v10H1zM9 3v10L3 8zM15 3v10L9 8z"],
  ["前のキー", "M9 2v12L2 8zM10 3h2v10h-2zM13 3h2v10h-2z"],
  ["再生", "M3 1l11 7-11 7z"],
  ["次のキー", "M7 2v12l7-6zM4 3h2v10H4zM1 3h2v10H1z"],
  ["最後へ", "M13 3h2v10h-2zM7 3v10l6-5zM1 3v10l6-5z"],
];

const NAV = [
  ["ズーム", <><circle cx="10" cy="6" r="4.500" /><path d="M7 9l-5 6" strokeWidth="2.500" /></>],
  ["すべてをズーム", <><path d="M8 1h3v3H8zM12 1h3v3h-3zM8 5h3v3H8zM12 5h3v3h-3z" stroke={TEAL} fill={TEAL} /><path d="M7 9l-5 6" strokeWidth="2.500" /></>],
  ["範囲ズーム", <><path d="M1 4V1h3M12 1h3v3M15 12v3h-3M4 15H1v-3" /><path d="M8 3l5 3v5l-5 3-5-3V6z" fill={TEAL} stroke="none" /></>],
  ["全範囲ズーム", <><path d="M9 3l5-1v9l-4 2zM3 7l4 1-2 3-3-1z" fill={TEAL} stroke={TEAL} /><path d="M3 12l5-5v7" /></>],
  ["領域ズーム", <><path d="M2 2h12v10H2z" stroke={TEAL} strokeDasharray="2 1.500" /><circle cx="9" cy="7" r="2.500" /><path d="M7 9l-4 5" /></>],
  ["パン", <path d="M4 15L1 9l2-1 2 2V3h2v4V1h2v6l1-5h2v6l2-3 1 1-2 6-2 3z" fill={LIGHT} stroke="none" />],
  ["オービット", <><circle cx="8" cy="8" r="4" fill={LIGHT} /><path d="M2 12c6 2 11-3 12-9M9 4l5-2" stroke={TEAL} /></>],
  ["ビューポートを最大化", <><path d="M1 1h14v14H1z" fill={LIGHT} stroke="none" /><path d="M3 3h4v4H3zM9 8h4v5H9z" fill="#444" stroke="none" /><path d="M9 3h4v3M3 10v3h4" stroke="#555" /></>],
];

function StatusBar() {
  return (
    <footer className="flex h-[34px] shrink-0 items-center overflow-hidden bg-[#444] text-[6px] leading-none text-[#ececec]">
      <div className="ml-0.5 flex h-[27px] w-[59px] shrink-0 flex-col border border-[#eee] bg-white">
        <div className="h-3 border-b-2 border-[#bbb] bg-[#dcc2c2]" />
        <input aria-label="スクリプト ミニ リスナー" defaultValue="スクリプト ミニ リス" className="min-h-0 w-full flex-1 px-0.5 text-[#8a8a8a] outline-none" />
      </div>
      <div className="mx-0.5 h-[27px] w-px shrink-0 bg-[#262626]" />
      <div className="flex min-w-0 flex-1 flex-col gap-[9px] pl-0.5 whitespace-nowrap">
        <p>1 個のオブジェクトが選択されました</p>
        <p>クリックまたはドラッグをして、オブジェクトを選択します</p>
      </div>

      <div className="flex w-[238px] shrink-0 flex-col gap-1">
        <div className="flex h-[11px] items-center gap-2">
          <button aria-label="選択を分離">
            <Icon className="size-[11px]"><path d="M1 4V1h3M12 1h3v3M1 12v3h3" strokeWidth="1" /><path d="M8 4v4l-4 3M8 8l4 3" stroke={TEAL} /><path d="M15 12v3h-3z" fill="#fff" /></Icon>
          </button>
          <button aria-label="選択をロック"><Lock className="size-[9px]" strokeWidth={3} /></button>
          <button aria-label="絶対/オフセット">
            <Icon className="size-[9px]"><path d="M1 1h14v14H1zM8 1v14M1 8h14" /><circle cx="8" cy="8" r="3" fill="#444" /></Icon>
          </button>
          <Coord axis="X" value="-0.0" />
          <Coord axis="Y" value="-52.547" />
          <Coord axis="Z" value="15.632" />
          <span className="whitespace-nowrap">グリッド = 10.0</span>
        </div>
        <div className="flex h-[13px] items-center pl-[108px] whitespace-nowrap">
          <Sep />
          <button aria-label="保護" className="mx-0.5 flex size-3 items-center justify-center rounded-xs bg-[#666]">
            <Icon className="size-2.5"><path d="M8 2l5 2v4c0 3-2 5-5 6-3-1-5-3-5-6V4z" fill={LIGHT} /><path d="M8 3v5h4c0 3-2 4-4 5V8H4V5z" fill="#555" stroke="none" /></Icon>
          </button>
          <span className="ml-px">有効:</span>
          <span className="mx-1 size-1.5 rounded-full bg-[#3fd43a]" />
          <button className="flex size-3 items-center justify-center rounded-xs bg-[#666]">
            <span className="flex size-[9px] items-center justify-center rounded-full bg-white font-bold text-[#333]">0</span>
          </button>
          <span className="mx-0.5"><Sep /></span>
          <Icon className="mx-1 size-2"><circle cx="8" cy="8" r="7" /><path d="M4 5l4 2 4-2M8 7v6" /></Icon>
          <button>時間タグを追加</button>
        </div>
      </div>

      <div className="ml-[22px] flex w-[71px] shrink-0 flex-col gap-1">
        <div className="flex h-[11px] items-center justify-between">
          {TRANSPORT.map(([label, d]) => (
            <button key={label} aria-label={label}>
              <Icon className={label === "再生" ? "size-[11px]" : "size-[9px]"}>
                <path d={d} fill="#e4e4e4" stroke="none" />
              </Icon>
            </button>
          ))}
        </div>
        <div className="flex h-[11px] items-center justify-between">
          <button aria-label="キー モード"><Icon className="size-2"><path d="M1 8l6-5v10zM15 8L9 3v10z" fill={LIGHT} stroke="none" /></Icon></button>
          <div className="flex h-[9px] w-[41px] items-center bg-[#656565] pr-px">
            <input aria-label="現在のフレーム" defaultValue="0" className="min-w-0 flex-1 bg-transparent px-0.5" />
            <Spinner />
          </div>
          <button aria-label="時間設定">
            <Icon className="size-2.5"><circle cx="6" cy="6" r="5" fill={LIGHT} /><path d="M6 3v3h3" stroke="#444" /><circle cx="11" cy="11" r="3" stroke={GOLD} strokeWidth="2" fill="#444" /></Icon>
          </button>
        </div>
      </div>

      <button aria-label="キーを設定" className="ml-2 flex h-[25px] w-[25px] shrink-0 items-center justify-center rounded-xs bg-[#676767]">
        <Icon className="size-[19px]">
          <path d="M7 1v11M1 7h11" stroke="#e4e4e4" strokeWidth="2" />
          <path d="M10 13l5-5M13 9l2 2" stroke={TEAL} strokeWidth="1" /><circle cx="10" cy="13" r="1.500" stroke={TEAL} strokeWidth="1" />
        </Icon>
      </button>
      <div className="ml-[3px] grid shrink-0 grid-cols-[37px_68px] gap-x-[3px] gap-y-0.5">
        <PushButton className="h-[11px]">オート キー</PushButton>
        <Select label="キー設定対象" value="選択" className="h-[11px]" />
        <PushButton className="h-[11px]">セット キー</PushButton>
        <div className="flex justify-between">
          <button aria-label="接線タイプ">
            <Icon className="size-[11px]"><path d="M3 14c2-12 8-12 10 0M1 4h14" stroke={TEAL} /><path d="M2 2h3v3H2zM11 2h3v3h-3z" fill={LIGHT} stroke="none" /></Icon>
          </button>
          <PushButton className="h-[11px] w-[52px]">キー フィルタ...</PushButton>
        </div>
      </div>
      <div className="mr-[17px] ml-2 grid shrink-0 grid-cols-4 gap-x-[3px] gap-y-1">
        {NAV.map(([label, shape]) => (
          <button key={label} aria-label={label}>
            <Icon className="size-2.5">{shape}</Icon>
          </button>
        ))}
      </div>
    </footer>
  );
}

export default function App() {
  return (
    <div className="relative flex min-h-screen bg-[#04132f] p-2 font-['Noto_Sans','Noto_Sans_CJK_JP',sans-serif] [font-feature-settings:'palt']">
      <Wallpaper />
      <div className="relative flex min-w-0 flex-1 flex-col overflow-hidden rounded bg-[#444]">
        <TitleBar />
        <MenuBar />
        <Toolbar />
        <Ribbon />
        <div className="flex flex-1">
          <LayoutStrip />
          <Viewports />
          <CommandPanel />
        </div>
        <TimeSlider />
        <TrackBar />
        <StatusBar />
      </div>
    </div>
  );
}
